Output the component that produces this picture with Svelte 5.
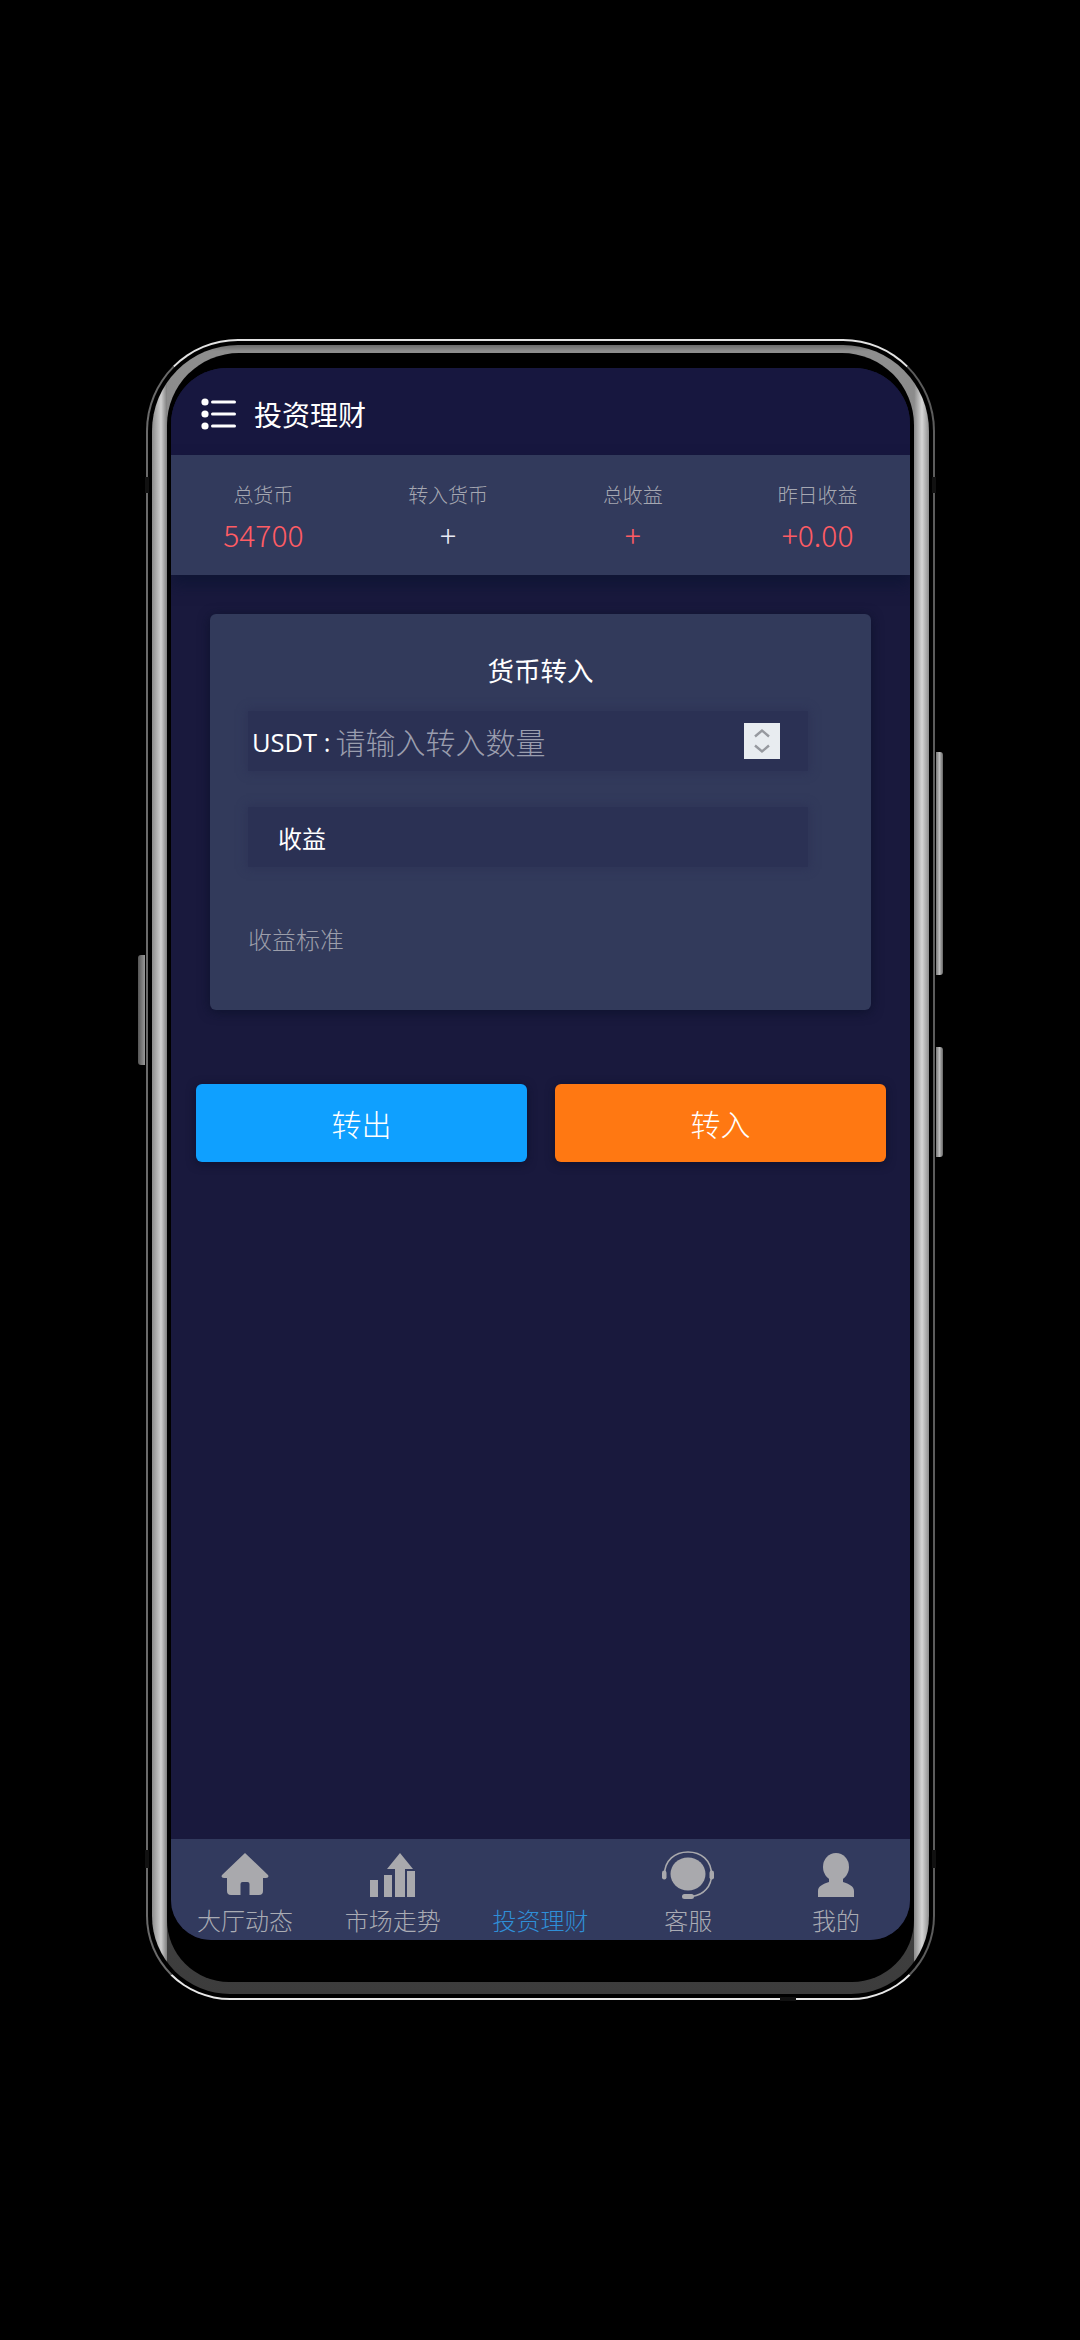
<script>
  const stats = [
    { label: '总货币', value: '54700', tone: 'red' },
    { label: '转入货币', value: '+', tone: 'white' },
    { label: '总收益', value: '+', tone: 'red' },
    { label: '昨日收益', value: '+0.00', tone: 'red' }
  ];
  const tabs = [
    { label: '大厅动态', icon: 'home' },
    { label: '市场走势', icon: 'chart' },
    { label: '投资理财', icon: 'none', active: true },
    { label: '客服', icon: 'service' },
    { label: '我的', icon: 'user' }
  ];
</script>

<div class="page">
  <div class="device">
    <span class="btn btn-left"></span>
    <span class="btn btn-r1"></span>
    <span class="btn btn-r2"></span>
    <span class="notch notch-tl"></span>
    <span class="notch notch-tr"></span>
    <span class="notch notch-bl"></span>
    <span class="notch notch-br"></span>
    <span class="notch notch-b"></span>
    <div class="band">
      <div class="bezel">
        <div class="screen">
          <header class="top">
            <svg class="menu" viewBox="0 0 36 34" width="36" height="34" aria-hidden="true">
              <circle cx="4" cy="5" r="3.6" fill="#fff" />
              <circle cx="4" cy="17" r="3.6" fill="#fff" />
              <circle cx="4" cy="29" r="3.6" fill="#fff" />
              <rect x="10" y="3.5" width="25" height="3" rx="1.5" fill="#fff" />
              <rect x="10" y="15.5" width="25" height="3" rx="1.5" fill="#fff" />
              <rect x="10" y="27.5" width="25" height="3" rx="1.5" fill="#fff" />
            </svg>
            <h1>投资理财</h1>
          </header>

          <section class="stats">
            {#each stats as s}
              <div class="stat">
                <div class="stat-label">{s.label}</div>
                <div class="stat-value {s.tone}">{s.value}</div>
              </div>
            {/each}
          </section>

          <main class="content">
            <section class="card">
              <h2>货币转入</h2>
              <div class="field field-input">
                <span class="usdt">USDT :</span>
                <input type="number" placeholder="请输入转入数量" />
                <span class="spin">
                  <svg viewBox="0 0 36 36" width="36" height="36" aria-hidden="true">
                    <path d="M11 13.5 L18 7.5 L25 13.5" fill="none" stroke="#96999f" stroke-width="2.4" />
                    <path d="M11 22.5 L18 28.5 L25 22.5" fill="none" stroke="#96999f" stroke-width="2.4" />
                  </svg>
                </span>
              </div>
              <div class="field field-text">收益</div>
              <p class="standard">收益标准</p>
            </section>

            <div class="actions">
              <button class="action blue">转出</button>
              <button class="action orange">转入</button>
            </div>
          </main>

          <nav class="tabs">
            {#each tabs as t}
              <div class="tab" class:active={t.active}>
                <div class="tab-icon">
                  {#if t.icon === 'home'}
                    <svg viewBox="0 0 48 42" width="48" height="42" aria-hidden="true">
                      <path fill="#a9a9ad" d="M24 0 L47 22 Q48.500 25 45 25 L42 25 L42 38 Q42 42 38 42 L28.500 42 L28.500 31 Q28.500 29 26.500 29 L21.500 29 Q19.500 29 19.500 31 L19.500 42 L10 42 Q6 42 6 38 L6 25 L3 25 Q-0.500 25 1 22 Z" />
                    </svg>
                  {:else if t.icon === 'chart'}
                    <svg viewBox="0 0 46 44" width="46" height="44" aria-hidden="true">
                      <g fill="#a9a9ad">
                        <rect x="0" y="27" width="8" height="17" />
                        <rect x="14" y="22" width="8" height="22" />
                        <rect x="25" y="15" width="10" height="29" />
                        <rect x="37" y="18" width="8" height="26" />
                        <path d="M30 0 L43 16 L17 16 Z" />
                      </g>
                    </svg>
                  {:else if t.icon === 'service'}
                    <svg class="svc" viewBox="0 0 52 48" width="52" height="48" aria-hidden="true">
                      <ellipse cx="26" cy="23" rx="17.500" ry="16.500" fill="#a9a9ad" />
                      <path d="M2.500 24 C2.500 9 13 1 26 1 C39 1 49.500 9 49.500 24 C49.500 35 42 44 30 45.500" fill="none" stroke="#a9a9ad" stroke-width="1.600" />
                      <rect x="0" y="19.500" width="4.500" height="9" rx="2.200" fill="#a9a9ad" />
                      <rect x="47.500" y="19.500" width="4.500" height="9" rx="2.200" fill="#a9a9ad" />
                      <rect x="20" y="43" width="12" height="5" rx="2.500" fill="#a9a9ad" />
                    </svg>
                  {:else if t.icon === 'user'}
                    <svg viewBox="0 0 36 44" width="36" height="44" aria-hidden="true">
                      <ellipse cx="18" cy="14" rx="13" ry="14" fill="#a9a9ad" />
                      <path fill="#a9a9ad" d="M11 25 L25 25 L25 29 C31 31 36 33 36 38 L36 44 L0 44 L0 38 C0 33 5 31 11 29 Z" />
                    </svg>
                  {/if}
                </div>
                <div class="tab-label">{t.label}</div>
              </div>
            {/each}
          </nav>
        </div>
      </div>
    </div>
  </div>
</div>

<style>
  :global(body) {
    margin: 0;
    background: #000;
  }
  .page {
    width: 1080px;
    height: 2340px;
    box-sizing: border-box;
    padding: 339px 0 0 146px;
    background: #000;
    font-family: "Noto Sans CJK SC", "Noto Sans", sans-serif;
    font-weight: 300;
    overflow: hidden;
  }
  .device {
    position: relative;
    width: 789px;
    box-sizing: border-box;
    padding: 4px;
    border: 2.500px solid;
    border-color: #e2e2e2 #5c5c5c #e8e8e8 #6a6a6a;
    border-radius: 92px 92px 84px 84px;
  }
  .btn {
    position: absolute;
    width: 7px;
    background: linear-gradient(90deg, #777, #bbb 50%, #666);
  }
  .btn-left { left: -10px; top: 614px; height: 110px; background: linear-gradient(90deg, #555, #999); border-radius: 3px 0 0 3px; }
  .btn-r1 { right: -10px; top: 411px; height: 223px; border-radius: 0 3px 3px 0; }
  .btn-r2 { right: -10px; top: 706px; height: 110px; border-radius: 0 3px 3px 0; }
  .notch { position: absolute; background: #111; }
  .notch-tl { left: -3px; top: 136px; width: 4px; height: 16px; }
  .notch-tr { right: -3px; top: 136px; width: 4px; height: 16px; }
  .notch-bl { left: -3px; top: 1509px; width: 4px; height: 18px; }
  .notch-br { right: -3px; top: 1509px; width: 4px; height: 18px; }
  .notch-b { bottom: -3px; left: 632px; width: 16px; height: 4px; }

  .band {
    padding: 8px 15px 12px;
    border-radius: 86px 86px 78px 78px;
    background:
      linear-gradient(90deg, #8c8c8c 0, #cfcfcf 9px, #7f7f7f 15px, transparent 15px, transparent calc(100% - 15px), #8a8a8a calc(100% - 15px), #d6d6d6 calc(100% - 7px), #8f8f8f 100%),
      linear-gradient(180deg, #6a6a6a 0, #8e8e8e 6px, #3c3c3c 100%);
  }
  .bezel {
    padding: 15px 4px 42px;
    border-radius: 72px 72px 62px 62px;
    background: #000;
  }
  .screen {
    display: flex;
    flex-direction: column;
    height: 1572px;
    overflow: hidden;
    border-radius: 56px 56px 40px 40px;
    background: #19193d;
    color: #fff;
  }
  .top {
    display: flex;
    align-items: center;
    gap: 17px;
    height: 87px;
    padding: 4px 0 0 30px;
    box-sizing: border-box;
    background: #17173f;
    flex: none;
  }
  h1 {
    margin: 0;
    font-size: 28px;
    font-weight: 400;
    line-height: 1;
  }
  .stats {
    position: relative;
    display: grid;
    grid-template-columns: repeat(4, 1fr);
    height: 120px;
    flex: none;
    background: #323a5c;
    box-shadow: 0 10px 14px rgba(12, 20, 50, 0.7);
  }
  .stat {
    display: flex;
    flex-direction: column;
    align-items: center;
    padding-top: 27px;
    box-sizing: border-box;
  }
  .stat-label {
    font-size: 20px;
    line-height: 26px;
    color: #a6a8b2;
  }
  .stat-value {
    margin-top: 9px;
    font-size: 30px;
    line-height: 34px;
  }
  .red { color: #ff5c64; }
  .white { color: #e8eaf6; }

  .content {
    flex: 1;
    min-height: 0;
    box-sizing: border-box;
    padding: 39px 24px 0 25px;
  }
  .card {
    width: 661px;
    height: 396px;
    margin: 0 0 0 14px;
    box-sizing: border-box;
    padding: 36px 38px 0;
    background: #323a5b;
    border-radius: 6px;
    box-shadow: 0 2px 12px rgba(10, 16, 40, 0.8);
  }
  h2 {
    margin: 0 0 21px;
    text-align: center;
    font-size: 26.500px;
    line-height: 40px;
    font-weight: 400;
  }
  .field {
    display: flex;
    align-items: center;
    width: 560px;
    height: 60px;
    box-sizing: border-box;
    background: #2b3154;
    box-shadow: 0 0 8px 2px #2e3457;
  }
  .field-input { padding: 0 28px 0 4px; }
  .usdt {
    font-size: 25.500px;
    color: #fff;
    font-weight: 400;
    white-space: nowrap;
    font-family: "Open Sans", "Noto Sans", sans-serif;
    margin: 2px 5px 0 0;
  }
  input {
    flex: 1;
    min-width: 0;
    height: 100%;
    padding: 0;
    border: 0;
    outline: 0;
    background: transparent;
    color: #fff;
    font: inherit;
    font-size: 30px;
    appearance: textfield;
    -moz-appearance: textfield;
  }
  input::placeholder { color: #9a9dae; opacity: 1; }
  input::-webkit-inner-spin-button,
  input::-webkit-outer-spin-button {
    -webkit-appearance: none;
    margin: 0;
  }
  .spin {
    display: block;
    width: 36px;
    height: 36px;
    background: #e8ecf0;
    flex: none;
  }
  .spin svg { display: block; }
  .field-text {
    margin-top: 36px;
    padding-left: 30px;
    font-size: 24px;
    font-weight: 400;
  }
  .standard {
    margin: 57px 0 0;
    font-size: 24px;
    line-height: 30px;
    color: #9c9eaa;
  }
  .actions {
    display: flex;
    gap: 28px;
    margin: 74px 0 0;
  }
  .action {
    width: 331px;
    height: 78px;
    padding: 0;
    border: 0;
    border-radius: 6px;
    color: #fff;
    font: inherit;
    font-size: 30px;
  }
  .blue { background: #0fa0ff; box-shadow: 0 2px 10px rgba(10, 14, 40, 0.7); }
  .orange { background: #ff7812; box-shadow: 0 2px 10px rgba(10, 14, 40, 0.7); }

  .tabs {
    display: grid;
    grid-template-columns: repeat(5, 1fr);
    height: 101px;
    flex: none;
    background: #323a5e;
  }
  .tab {
    display: flex;
    flex-direction: column;
    align-items: center;
    padding-top: 14px;
    box-sizing: border-box;
  }
  .tab-icon {
    display: flex;
    align-items: flex-start;
    justify-content: center;
    height: 51px;
  }
  .tab-icon svg { display: block; }
  .svc { margin-top: -2px; }
  .tab-label {
    font-size: 24px;
    line-height: 32px;
    color: #aaacb4;
  }
  .active .tab-label { color: #2f8fd8; }
</style>
